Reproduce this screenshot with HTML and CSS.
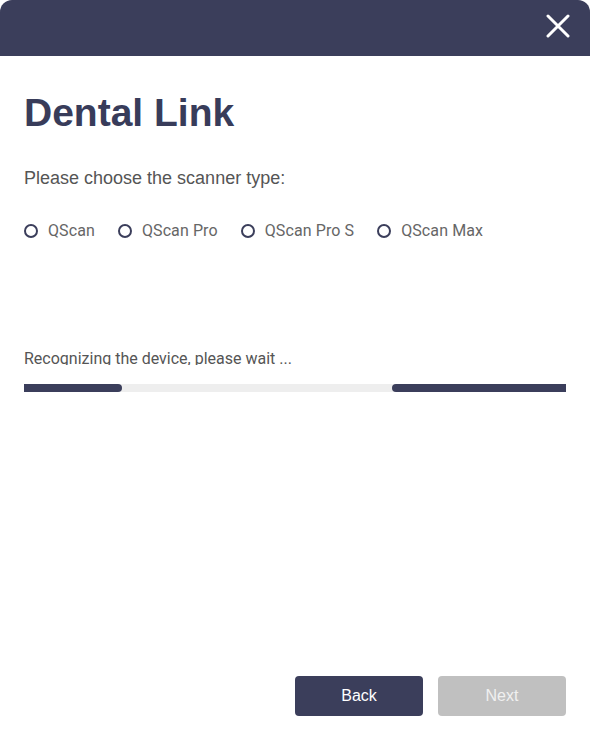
FILE: index.html
```html
<!DOCTYPE html>
<html lang="en">
<head>
    <meta charset="UTF-8">
    <meta name="viewport" content="width=device-width, initial-scale=1.0">
    <title>Dental Link</title>
    <link rel="stylesheet" href="styles.css">
</head>
<body>
    <div class="dialog">
        <header class="dialog-header">
            <button class="close-btn" aria-label="Close">
                <svg width="24" height="24" viewBox="0 0 24 24">
                    <path d="M2 2 L22 22 M22 2 L2 22" stroke="#fff" stroke-width="3" stroke-linecap="round" fill="none"/>
                </svg>
            </button>
        </header>

        <main class="dialog-body">
            <h1 class="title">Dental Link</h1>
            <p class="subtitle">Please choose the scanner type:</p>

            <div class="scanner-options">
                <label class="option"><span class="radio"></span>QScan</label>
                <label class="option"><span class="radio"></span>QScan Pro</label>
                <label class="option"><span class="radio"></span>QScan Pro S</label>
                <label class="option"><span class="radio"></span>QScan Max</label>
            </div>

            <div class="status">
                <div class="status-text">Recognizing the device, please wait ...</div>
                <div class="progress">
                    <div class="progress-seg left" style="width: 98px"></div>
                    <div class="progress-seg right" style="width: 174px"></div>
                </div>
            </div>

            <div class="actions">
                <button class="btn btn-back">Back</button>
                <button class="btn btn-next" disabled>Next</button>
            </div>
        </main>
    </div>
</body>
</html>
```

FILE: styles.css
```css
* {
    margin: 0;
    padding: 0;
    box-sizing: border-box;
}

body {
    background-color: #fff;
    font-family: "Liberation Sans", Arial, sans-serif;
    width: 590px;
    height: 740px;
    overflow: hidden;
}

.dialog {
    height: 740px;
    display: flex;
    flex-direction: column;
    background-color: #fff;
    border-radius: 12px;
    overflow: hidden;
}

/* Header */
.dialog-header {
    height: 56px;
    background-color: #3b3e5b;
    display: flex;
    justify-content: flex-end;
    align-items: flex-start;
    padding: 14px 20px 0 0;
}

.close-btn {
    background: none;
    border: none;
    width: 24px;
    height: 24px;
    cursor: pointer;
    display: flex;
}

/* Body */
.dialog-body {
    flex: 1;
    display: flex;
    flex-direction: column;
    padding: 0 24px 24px;
}

.title {
    margin-top: 34px;
    font-size: 39px;
    line-height: 46px;
    font-weight: bold;
    color: #383c5a;
}

.subtitle {
    margin-top: 31px;
    font-size: 18px;
    line-height: 22px;
    color: #555;
}

.scanner-options {
    margin-top: 32px;
    display: flex;
    gap: 23px;
}

.option {
    display: flex;
    align-items: center;
    gap: 10px;
    font-family: Roboto, "Liberation Sans", sans-serif;
    font-size: 16px;
    letter-spacing: 0.1px;
    line-height: 20px;
    color: #666;
    cursor: pointer;
}

.radio {
    width: 14px;
    height: 14px;
    border: 2px solid #3b3e5b;
    border-radius: 50%;
}

/* Progress */
.status {
    margin-top: 109px;
}

.status-text {
    font-family: Roboto, "Liberation Sans", sans-serif;
    font-size: 16px;
    line-height: 18px;
    height: 15px;
    overflow: hidden;
    color: #555;
}

.progress {
    margin-top: 19px;
    height: 8px;
    background-color: #eee;
    display: flex;
    justify-content: space-between;
}

.progress-seg {
    height: 100%;
    background-color: #3b3e5b;
}

.progress-seg.left {
    border-radius: 0 4px 4px 0;
}

.progress-seg.right {
    border-radius: 4px 0 0 4px;
}

/* Buttons */
.actions {
    margin-top: auto;
    display: flex;
    justify-content: flex-end;
    gap: 15px;
}

.btn {
    width: 128px;
    height: 40px;
    border: none;
    border-radius: 4px;
    font-family: "Liberation Sans", Arial, sans-serif;
    font-size: 16px;
    color: #fff;
    cursor: pointer;
}

.btn-back {
    background-color: #3b3e5b;
}

.btn-next {
    background-color: #c0c0c0;
    color: #f0f0f0;
    cursor: default;
}
```
